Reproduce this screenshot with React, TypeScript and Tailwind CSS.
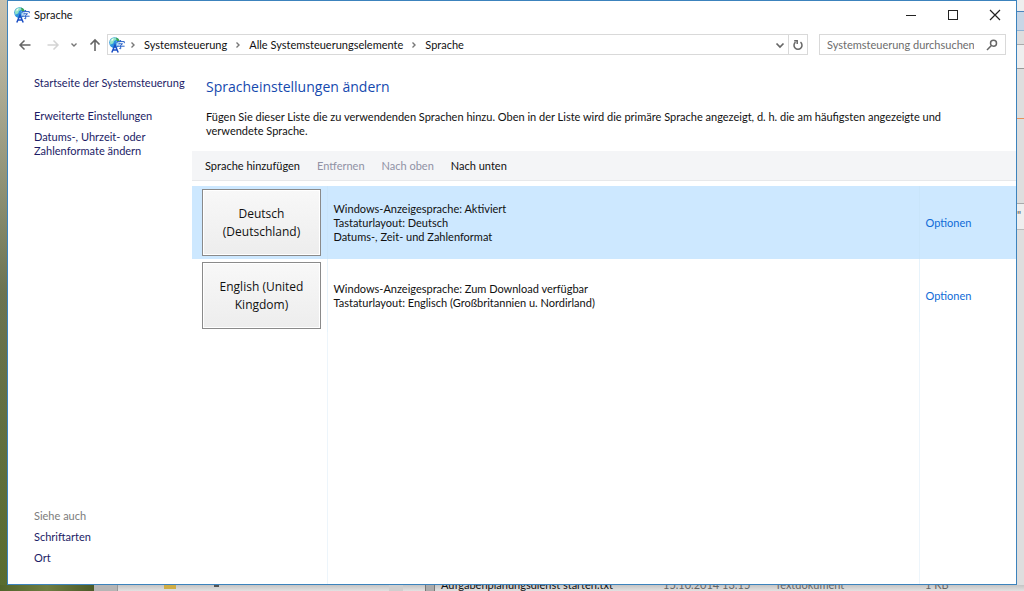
import type { ReactNode } from "react";

const languages = [
  {
    name: "Deutsch (Deutschland)",
    details: [
      "Windows-Anzeigesprache: Aktiviert",
      "Tastaturlayout: Deutsch",
      "Datums-, Zeit- und Zahlenformat",
    ],
    selected: true,
  },
  {
    name: "English (United Kingdom)",
    details: [
      "Windows-Anzeigesprache: Zum Download verfügbar",
      "Tastaturlayout: Englisch (Großbritannien u. Nordirland)",
    ],
    selected: false,
  },
];

const LanguageIcon = () => (
  <svg viewBox="0 0 16 16" className="h-4 w-4 shrink-0" fill="none">
    <circle cx="5.6" cy="5.6" r="5.4" fill="#2c93de" />
    <path d="M.6 4.5C1.4 2 3.4.4 6 .4l2 2-3 1.6-.8 2.500-1.6.4L1.6 8z" fill="#8fe3c8" />
    <path d="M2.500 2.500 4.700 1.200 4.200 3 2.500 4.600z" fill="#f4fcf8" />
    <path d="M7 .5c1.700.5 3 1.700 3.600 3.500L8 4.200z" fill="#3fa848" />
    <path d="M7.500 4h8.200v5.500h-8.200z" fill="#fff" opacity=".7" />
    <path d="M2.800 15.500 6 8l3.200 7.500M4 12.900h4" stroke="#1c4fc4" strokeWidth="1.500" />
    <path d="M8 6.200V4.600h7.300v1.600M11.600 3v1.600M9.500 6.800h4l-1.800 1.400v3.600l-1.400-.4M8 9.200h7.600" stroke="#2660c8" strokeWidth="1" />
  </svg>
);

const Chevron = ({ down = false }: { down?: boolean }) => (
  <svg viewBox="0 0 8 8" className="h-2 w-2 shrink-0" fill="none" stroke="#777" strokeWidth="1.4">
    <path d={down ? "M1.500 2.500 4 5 6.500 2.500" : "M2.500 1.500 5 4 2.500 6.500"} />
  </svg>
);

const NavButton = ({ label, children }: { label: string; children: ReactNode }) => (
  <button aria-label={label} className="flex shrink-0 items-center justify-center">
    {children}
  </button>
);

const TitleBar = () => (
  <header className="flex h-[27px] items-center pl-1.5">
    <LanguageIcon />
    <h1 className="ml-1 flex-1">Sprache</h1>
    <NavButton label="Minimieren">
      <svg viewBox="0 0 42 26" className="h-[26px] w-[42px]" stroke="#222">
        <path d="M16 13.5h10" />
      </svg>
    </NavButton>
    <NavButton label="Maximieren">
      <svg viewBox="0 0 42 26" className="h-[26px] w-[42px]" fill="none" stroke="#222">
        <rect x="16.5" y="8.5" width="9" height="9" />
      </svg>
    </NavButton>
    <NavButton label="Schließen">
      <svg viewBox="0 0 42 26" className="h-[26px] w-[42px]" stroke="#222" strokeWidth="1.2">
        <path d="m16 8 10 10M26 8 16 18" />
      </svg>
    </NavButton>
  </header>
);

const AddressBar = () => (
  <div className="mt-1.5 flex h-[21px] items-center px-2.5">
    <NavButton label="Zurück">
      <svg viewBox="0 0 14 14" className="h-3.5 w-3.5" fill="none" stroke="#666" strokeWidth="1.5">
        <path d="M12.5 7H2M6.5 2.5 2 7l4.5 4.5" />
      </svg>
    </NavButton>
    <div className="w-3.5" />
    <NavButton label="Vorwärts">
      <svg viewBox="0 0 14 14" className="h-3.5 w-3.5" fill="none" stroke="#d4d4d4" strokeWidth="1.5">
        <path d="M1.5 7H12M7.5 2.5 12 7l-4.5 4.5" />
      </svg>
    </NavButton>
    <div className="w-2.5" />
    <NavButton label="Verlauf">
      <Chevron down />
    </NavButton>
    <div className="w-2.5" />
    <NavButton label="Nach oben">
      <svg viewBox="0 0 14 14" className="h-3.5 w-3.5" fill="none" stroke="#666" strokeWidth="1.6">
        <path d="M7 13V2M2.5 6.5 7 2l4.5 4.5" />
      </svg>
    </NavButton>
    <nav className="ml-[5px] flex h-full flex-1 items-center border border-[#d9d9d9] pl-px">
      <LanguageIcon />
      <div className="ml-1 flex flex-1 items-center gap-[7px]">
        <Chevron />
        <a href="#systemsteuerung">Systemsteuerung</a>
        <Chevron />
        <a href="#elemente">Alle Systemsteuerungselemente</a>
        <Chevron />
        <a href="#sprache">Sprache</a>
      </div>
      <button aria-label="Adressen" className="flex w-[17px] justify-center">
        <svg viewBox="0 0 10 10" className="h-2.5 w-2.5" fill="none" stroke="#666" strokeWidth="1.7">
          <path d="M1.5 3.5 5 7l3.5-3.5" />
        </svg>
      </button>
      <button
        aria-label="Aktualisieren"
        className="flex h-full w-[19px] items-center justify-center border-l border-[#d9d9d9]"
      >
        <svg viewBox="0 0 12 12" className="h-3 w-3" fill="none" stroke="#666" strokeWidth="1.5">
          <path d="M8.5 3.2A4 4 0 1 1 3.5 3.2M2.2 1.7h3v3.2" />
        </svg>
      </button>
    </nav>
    <label className="ml-[11px] flex h-full w-[187px] items-center border border-[#d9d9d9] px-[7px]">
      <input
        type="search"
        aria-label="Systemsteuerung durchsuchen"
        placeholder="Systemsteuerung durchsuchen"
        className="min-w-0 flex-1 outline-none placeholder:text-[#6d6d6d]"
      />
      <svg viewBox="0 0 12 12" className="h-3 w-3 shrink-0" fill="none" stroke="#666" strokeWidth="1.5">
        <circle cx="7.5" cy="4.2" r="3" />
        <path d="M5.4 6.5 1 11" />
      </svg>
    </label>
  </div>
);

const Sidebar = () => (
  <aside className="flex w-[184px] shrink-0 flex-col pt-[21px] pb-[19px] pl-[26px] text-[#1c1c66]">
    <a href="#start" className="mb-[19px] whitespace-nowrap">Startseite der Systemsteuerung</a>
    <a href="#erweitert" className="mb-[7px]">Erweiterte Einstellungen</a>
    <a href="#formate" className="w-32">Datums-, Uhrzeit- oder Zahlenformate ändern</a>
    <div className="mt-auto flex flex-col gap-[7px]">
      <span className="text-[#7c7c7c]">Siehe auch</span>
      <a href="#schriftarten">Schriftarten</a>
      <a href="#ort">Ort</a>
    </div>
  </aside>
);

const LanguageTable = () => (
  <table className="w-full table-fixed border-collapse">
    <tbody>
      {languages.map((language) => (
        <tr key={language.name} className={language.selected ? "bg-[#cde8ff]" : ""}>
          <td className="h-[73px] w-[135px] pl-2.5">
            <button className="block h-[67px] w-[119px] border border-[#8a8a8a] bg-linear-to-b from-[#f8f8f8] to-[#ededed] px-3 pt-px font-['Open_Sans',sans-serif] text-[12px] leading-[18px] inset-ring inset-ring-white">
              {language.name}
            </button>
          </td>
          <td className="border-l border-[#c4e0f6]/40 pl-1.5">
            {language.details.map((line) => (
              <p key={line}>{line}</p>
            ))}
          </td>
          <td className="w-[97px] border-l border-[#c4e0f6]/40 pl-1.5">
            <a href="#optionen" className="text-[#0f6bd7]">Optionen</a>
          </td>
        </tr>
      ))}
    </tbody>
  </table>
);

const Content = () => (
  <main className="flex min-w-0 flex-1 flex-col">
    <h2 className="mt-[22px] ml-3.5 font-['Open_Sans',sans-serif] text-[14px] leading-5 text-[#1549ae]">
      Spracheinstellungen ändern
    </h2>
    <p className="mt-[13px] mr-14 ml-3.5">
      Fügen Sie dieser Liste die zu verwendenden Sprachen hinzu. Oben in der Liste wird die primäre Sprache
      angezeigt, d. h. die am häufigsten angezeigte und verwendete Sprache.
    </p>
    <div className="mt-[13px] mb-[5px] flex h-[30px] items-center gap-[17px] border-b border-[#e7e8ea] bg-[#f4f5f7] pl-[13px]">
      <button>Sprache hinzufügen</button>
      <button disabled className="text-[#9092a5]">Entfernen</button>
      <button disabled className="text-[#9092a5]">Nach oben</button>
      <button>Nach unten</button>
    </div>
    <LanguageTable />
    <div className="flex flex-1">
      <div className="w-[135px]" />
      <div className="flex-1 border-l border-[#edf5fb]" />
      <div className="w-[97px] border-l border-[#edf5fb]" />
    </div>
  </main>
);

// Explorer row, its upper half lies behind the window
const ExplorerRow = () => (
  <div className="-mt-1.5 flex h-3 bg-linear-to-b from-[#a8a8a8] to-[#e2e2e2] leading-3 whitespace-nowrap text-[#666]">
    <div className="w-[94px] bg-linear-to-r from-[#52652b] via-[#6f7d42] to-[#4b5a28]" />
    <div className="w-6 border-r border-[#999] bg-[#b5b5b5]" />
    <div className="ml-[46px] h-2.5 w-3 bg-[#d0ad45]" />
    <div className="ml-[38px] h-2 w-[5px] bg-[#555]" />
    <div className="ml-[170px] w-3.5 bg-[#cfcfcf]" />
    <div className="ml-[22px] w-2.5 border-x border-[#777] bg-[#aaa]" />
    <span className="ml-1.5 w-[222px] text-[#111]">Aufgabenplanungsdienst starten.txt</span>
    <span className="w-[112px]">15.10.2014 13:15</span>
    <span className="w-[150px]">Textdokument</span>
    <span>1 KB</span>
  </div>
);

const Desktop = () => (
  <div className="w-[7px] shrink-0 bg-linear-to-b from-[#b9b39e] via-[#7a8062] to-[#5d7034]">
    <div className="h-full bg-linear-to-b from-[#d1cbbb]/60 via-[#556038]/40 to-[#55692c]/60" />
  </div>
);

const ExplorerEdge = () => (
  <div className="flex w-[7px] shrink-0 flex-col bg-[#dedede]">
    <div className="h-3 border-b border-[#4c83bd] bg-[#eee]" />
    <div className="h-[19px] border-b border-[#8fb4d6] bg-[#c8d6e6]" />
    <div className="h-[14px] border-b border-[#aaa]" />
    <div className="h-6 border-b border-[#999] bg-[#eee]" />
    <div className="h-[50px] border-b border-[#e8905c]" />
    <div className="h-[85px] border-b border-[#aaa]" />
    <div className="h-[26px] border-b border-[#bbb] bg-[#eee] pt-1 text-[#555]">"</div>
  </div>
);

export default function App() {
  return (
    <div className="flex min-h-screen flex-col bg-[#d8d8d8] font-['Lato',sans-serif] text-[11px] leading-[14px] text-[#111]">
      <div className="relative z-10 flex flex-1">
        <Desktop />
        <div className="flex min-w-0 flex-1 flex-col border border-[#3c83bd] bg-white">
          <TitleBar />
          <AddressBar />
          <div className="flex flex-1">
            <Sidebar />
            <Content />
          </div>
        </div>
        <ExplorerEdge />
      </div>
      <ExplorerRow />
    </div>
  );
}
